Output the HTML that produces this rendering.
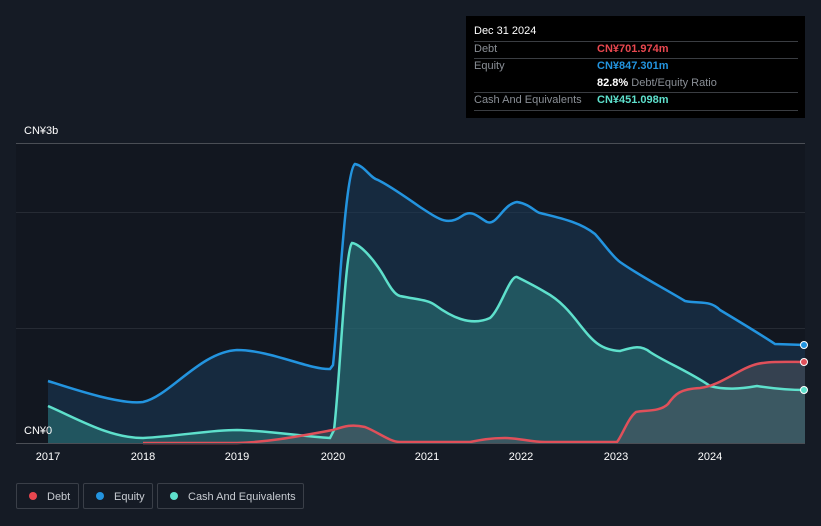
<!DOCTYPE html><html><head><meta charset="utf-8"><style>
body{margin:0;width:821px;height:526px;background:#151b25;font-family:"Liberation Sans","Noto Sans CJK SC",sans-serif;overflow:hidden;position:relative}
.t{position:absolute;color:#fff;font-size:11px}
.tip{position:absolute;left:466px;top:16px;width:339px;height:102px;background:#000}
.row{position:absolute;left:8px;width:324px;font-size:11px;color:#8a8f96}
.line{position:absolute;left:8px;width:324px;height:1px;background:#3a3d42}
.lg{position:absolute;top:483px;height:26px;border:1px solid #3a3f48;border-radius:2px;color:#c8ccd2;font-size:11px;line-height:26px;box-sizing:border-box}
.dot{display:inline-block;width:8px;height:8px;border-radius:50%;margin:0 10px 0 12px;vertical-align:-0px}
</style></head><body>
<svg width="821" height="526" style="position:absolute;left:0;top:0">
<rect x="16" y="143" width="789" height="300" fill="#121720"/>
<line x1="16" y1="143.5" x2="805" y2="143.5" stroke="#4a4e55"/>
<line x1="16" y1="212.5" x2="805" y2="212.5" stroke="#262b34"/>
<line x1="16" y1="328.5" x2="805" y2="328.5" stroke="#262b34"/>
<path d="M48,381 C70,388 120,405 143,402 C170,396 200,352 237,350 C270,350 310,370 330,369 L333,365 C338,320 345,170 355,164 C365,166 370,178 378,180 C390,186 410,200 420,207 C440,220 448,226 462,216 C472,209 478,217 487,222 C497,226 503,204 517,202 C530,204 535,212 540,213 C560,218 580,222 595,234 C605,245 612,256 620,262 C640,276 660,286 685,301 C700,304 710,300 720,310 C740,322 760,334 775,344 L805,345 L805,443 L48,443Z" fill="#1a3a5a" fill-opacity="0.55"/>
<path d="M48,406 C80,420 110,438 143,438 C180,436 210,430 237,430 C270,431 300,436 330,438 L334,430 C340,380 345,250 352,243 C360,244 372,258 378,267 C386,278 392,294 400,296 C420,300 428,300 435,305 C450,316 470,327 490,318 C500,310 510,275 517,277 C527,282 535,286 545,292 C560,300 570,312 580,325 C592,340 600,350 620,351 C630,348 640,344 650,352 C665,362 690,372 710,386 C725,390 740,389 757,386 C770,388 790,390 805,390 L805,443 L48,443Z" fill="#2e8a88" fill-opacity="0.45"/>
<path d="M143,443 L237,443 C270,442 300,436 333,430 C345,426 352,424 365,427 C378,432 390,442 400,442 L470,442 C480,440 490,438 505,438 C520,438 530,442 545,442 L617,442 C622,436 628,418 636,412 C645,410 660,412 668,404 C675,394 680,389 700,388 C720,386 740,368 757,364 C770,361 790,362 805,362 L805,443Z" fill="#5a5d66" fill-opacity="0.45"/>
<path d="M48,381 C70,388 120,405 143,402 C170,396 200,352 237,350 C270,350 310,370 330,369 L333,365 C338,320 345,170 355,164 C365,166 370,178 378,180 C390,186 410,200 420,207 C440,220 448,226 462,216 C472,209 478,217 487,222 C497,226 503,204 517,202 C530,204 535,212 540,213 C560,218 580,222 595,234 C605,245 612,256 620,262 C640,276 660,286 685,301 C700,304 710,300 720,310 C740,322 760,334 775,344 L805,345" fill="none" stroke="#2394df" stroke-width="2.5"/>
<path d="M48,406 C80,420 110,438 143,438 C180,436 210,430 237,430 C270,431 300,436 330,438 L334,430 C340,380 345,250 352,243 C360,244 372,258 378,267 C386,278 392,294 400,296 C420,300 428,300 435,305 C450,316 470,327 490,318 C500,310 510,275 517,277 C527,282 535,286 545,292 C560,300 570,312 580,325 C592,340 600,350 620,351 C630,348 640,344 650,352 C665,362 690,372 710,386 C725,390 740,389 757,386 C770,388 790,390 805,390" fill="none" stroke="#5ee0cc" stroke-width="2.5"/>
<path d="M143,443 L237,443 C270,442 300,436 333,430 C345,426 352,424 365,427 C378,432 390,442 400,442 L470,442 C480,440 490,438 505,438 C520,438 530,442 545,442 L617,442 C622,436 628,418 636,412 C645,410 660,412 668,404 C675,394 680,389 700,388 C720,386 740,368 757,364 C770,361 790,362 805,362" fill="none" stroke="#e0505a" stroke-width="2.5"/>
<line x1="16" y1="443.5" x2="805" y2="443.5" stroke="#4a4e55"/>
<circle cx="804" cy="345" r="3.5" fill="#2394df" stroke="#fff" stroke-width="1"/>
<circle cx="804" cy="362" r="3.5" fill="#e0505a" stroke="#fff" stroke-width="1"/>
<circle cx="804" cy="390" r="3.5" fill="#5ee0cc" stroke="#fff" stroke-width="1"/>
<g fill="#fff" font-size="11" text-anchor="middle" font-family="Liberation Sans,sans-serif">
<text x="48" y="460">2017</text><text x="143" y="460">2018</text><text x="237" y="460">2019</text><text x="333" y="460">2020</text><text x="427" y="460">2021</text><text x="521" y="460">2022</text><text x="616" y="460">2023</text><text x="710" y="460">2024</text></g>
</svg>
<div class="t" style="left:24px;top:125px">CN¥3b</div>
<div class="t" style="left:24px;top:425px">CN¥0</div>
<div class="tip">
<div class="row" style="top:9px;color:#fff">Dec 31 2024</div>
<div class="line" style="top:25px"></div>
<div class="row" style="top:27px">Debt<span style="position:absolute;left:123px;color:#e8474f;font-weight:bold">CN¥701.974m</span></div>
<div class="line" style="top:42px"></div>
<div class="row" style="top:44px">Equity<span style="position:absolute;left:123px;color:#2394df;font-weight:bold">CN¥847.301m</span></div>
<div class="row" style="top:61px"><span style="position:absolute;left:123px;white-space:nowrap"><b style="color:#fff">82.8%</b> Debt/Equity Ratio</span></div>
<div class="line" style="top:76px"></div>
<div class="row" style="top:78px">Cash And Equivalents<span style="position:absolute;left:123px;color:#5ee0cc;font-weight:bold">CN¥451.098m</span></div>
<div class="line" style="top:94px"></div>
</div>
<div class="lg" style="left:16px;width:63px"><span class="dot" style="background:#e8474f"></span>Debt</div>
<div class="lg" style="left:83px;width:70px"><span class="dot" style="background:#2394df"></span>Equity</div>
<div class="lg" style="left:157px;width:147px"><span class="dot" style="background:#5ee0cc"></span>Cash And Equivalents</div>
</body></html>
